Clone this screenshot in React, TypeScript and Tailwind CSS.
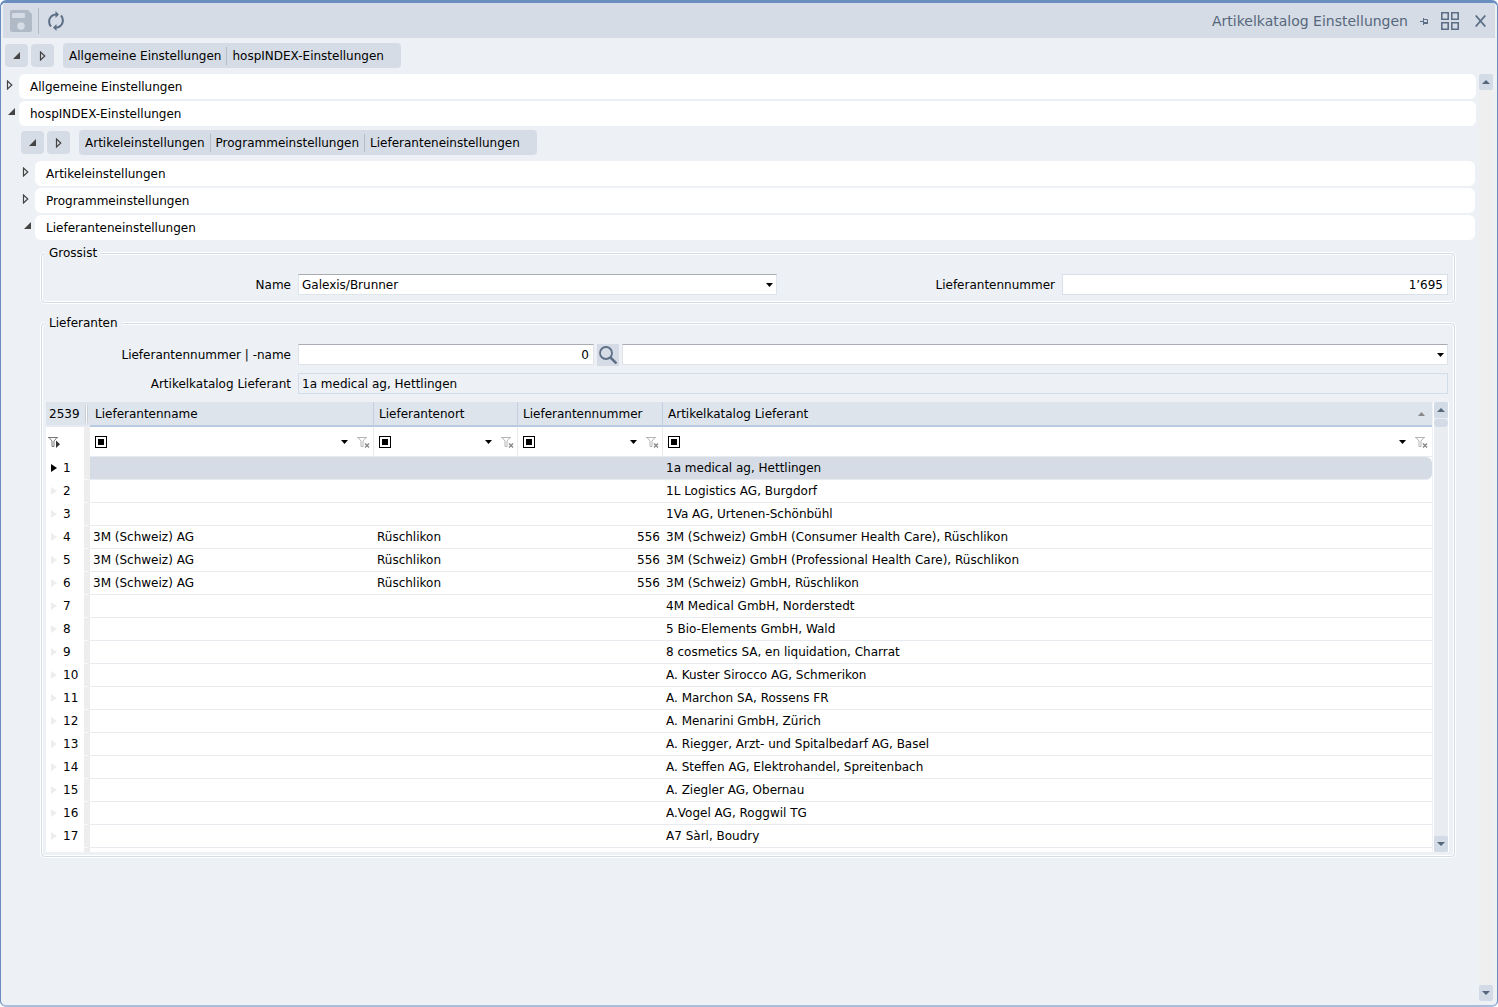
import type { ReactNode } from 'react';

type Supplier = {
  name?: string;
  city?: string;
  no?: string;
  catalog: string;
};

const suppliers: Supplier[] = [
  { catalog: '1a medical ag, Hettlingen' },
  { catalog: '1L Logistics AG, Burgdorf' },
  { catalog: '1Va AG, Urtenen-Schönbühl' },
  { name: '3M (Schweiz) AG', city: 'Rüschlikon', no: '556', catalog: '3M (Schweiz) GmbH (Consumer Health Care), Rüschlikon' },
  { name: '3M (Schweiz) AG', city: 'Rüschlikon', no: '556', catalog: '3M (Schweiz) GmbH (Professional Health Care), Rüschlikon' },
  { name: '3M (Schweiz) AG', city: 'Rüschlikon', no: '556', catalog: '3M (Schweiz) GmbH, Rüschlikon' },
  { catalog: '4M Medical GmbH, Norderstedt' },
  { catalog: '5 Bio-Elements GmbH, Wald' },
  { catalog: '8 cosmetics SA, en liquidation, Charrat' },
  { catalog: 'A. Kuster Sirocco AG, Schmerikon' },
  { catalog: 'A. Marchon SA, Rossens FR' },
  { catalog: 'A. Menarini GmbH, Zürich' },
  { catalog: 'A. Riegger, Arzt- und Spitalbedarf AG, Basel' },
  { catalog: 'A. Steffen AG, Elektrohandel, Spreitenbach' },
  { catalog: 'A. Ziegler AG, Obernau' },
  { catalog: 'A.Vogel AG, Roggwil TG' },
  { catalog: 'A7 Sàrl, Boudry' },
];

const columns = ['Lieferantenname', 'Lieferantenort', 'Lieferantennummer', 'Artikelkatalog Lieferant'];

function OpenIcon() {
  return (
    <svg viewBox="0 0 7 7" className="h-[7px] w-[7px]" fill="#444">
      <path d="M7 0v7H0z" />
    </svg>
  );
}

function ClosedIcon() {
  return (
    <svg viewBox="0 0 7 10" className="h-[10px] w-[7px]" fill="none" stroke="#444" strokeWidth="1.200">
      <path d="M1.500 1v8L5.800 5z" />
    </svg>
  );
}

function DownIcon() {
  return (
    <svg viewBox="0 0 7 4" className="h-1 w-[7px]" fill="#000">
      <path d="M0 0h7L3.500 4z" />
    </svg>
  );
}

function FunnelIcon({ kind }: { kind: 'apply' | 'clear' }) {
  return (
    <svg viewBox="0 0 13 12" className="h-3 w-[13px]" fill="none">
      {kind === 'apply' ? (
        <>
          <path d="M0 1.500h10M1 1.500l3 3.500v5.500h2V5l3-3.500" stroke="#777" />
          <path d="M8 4.500V12l4-3.700z" fill="#333" />
        </>
      ) : (
        <>
          <path d="M0 1.500h10M1 1.500l3 3.500v5.500h2V5l3-3.500" stroke="#b4b4b4" />
          <path d="M8 7.500l4 4m0-4l-4 4" stroke="#888" strokeWidth="1.400" />
        </>
      )}
    </svg>
  );
}

function ToggleButtons() {
  return (
    <div className="flex gap-[3px]">
      <button aria-label="Alle öffnen" className="flex h-[23px] w-[23px] items-center justify-center rounded-sm bg-[#d5dce5]">
        <OpenIcon />
      </button>
      <button aria-label="Alle schliessen" className="flex h-[23px] w-[23px] items-center justify-center rounded-sm bg-[#d5dce5]">
        <ClosedIcon />
      </button>
    </div>
  );
}

function JumpBar({ items }: { items: string[] }) {
  return (
    <div className="flex items-center gap-[9px]">
      <ToggleButtons />
      <nav className="flex h-[25px] items-center rounded-sm bg-[#d5dce5] pr-3">
        {items.map((item, i) => (
          <a
            key={item}
            href="#"
            className={i > 0 ? 'border-l border-[#b4bcc6] px-[5px] leading-[18px]' : 'pr-[5px] pl-[6px] leading-[18px]'}
          >
            {item}
          </a>
        ))}
      </nav>
    </div>
  );
}

function TreeRow({ label, open }: { label: string; open?: boolean }) {
  return (
    <button className="flex w-full text-left" aria-expanded={!!open}>
      <span className={open ? 'flex h-[21px] w-4 items-center pl-[5px]' : 'flex h-[21px] w-4 items-center pl-[3px]'}>
        {open ? <OpenIcon /> : <ClosedIcon />}
      </span>
      <span className="flex h-[25px] flex-1 items-center rounded-md bg-white pl-[11px]">{label}</span>
    </button>
  );
}

function Group({ title, children }: { title: string; children: ReactNode }) {
  return (
    <fieldset className="rounded-sm border border-[#d3dde5] pr-[5px] pb-1 pl-1 shadow-[0_0_0_1px_#fff,inset_0_0_0_1px_#fff]">
      <legend className="-ml-px bg-[#edf0f5] px-1 leading-4">{title}</legend>
      {children}
    </fieldset>
  );
}

function Combo({ id, label, value }: { id: string; label?: string; value: string }) {
  return (
    <div className="relative min-w-0 flex-1">
      <select
        id={id}
        aria-label={label}
        className="block h-[21px] w-full appearance-none border border-[#dde4ea] border-t-[#a9adb3] bg-white px-[3px] leading-[18px]"
      >
        <option>{value}</option>
      </select>
      <span className="pointer-events-none absolute top-[9px] right-1">
        <DownIcon />
      </span>
    </div>
  );
}

function ScrollBar({ thumb }: { thumb?: boolean }) {
  const button = 'flex h-4 w-full items-center justify-center rounded-xs bg-[#d3dbe6]';
  return (
    <div className={thumb ? 'flex w-4 flex-col border-x border-white bg-[#e9edf2]' : 'flex w-[14px] flex-col bg-[#efefef]'}>
      <button aria-label="Nach oben" className={button}>
        <svg viewBox="0 0 8 4" className="h-1 w-2" fill="#56677c">
          <path d="M0 4h8L4 0z" />
        </svg>
      </button>
      {thumb && <div className="mt-px h-2 rounded-sm bg-[#d3dbe6]" />}
      <div className="flex-1" />
      <button aria-label="Nach unten" className={button}>
        <svg viewBox="0 0 8 4" className="h-1 w-2" fill="#56677c">
          <path d="M0 0h8L4 4z" />
        </svg>
      </button>
    </div>
  );
}

function TitleBar() {
  return (
    <header className="mx-[2px] flex h-[35px] items-center justify-between bg-[#d5dce5] pr-[9px] pl-[7px] text-[#56677c]">
      <div className="flex items-center">
        <button aria-label="Speichern" disabled>
          <svg viewBox="0 0 22 22" className="h-[22px] w-[22px]">
            <path d="M2 0h16l4 4v16a2 2 0 0 1-2 2H2a2 2 0 0 1-2-2V2a2 2 0 0 1 2-2z" fill="#b0bac6" />
            <rect x="2" y="3" width="13" height="5" rx="1" fill="#d5dce5" />
            <circle cx="11" cy="16" r="3.800" fill="#d5dce5" />
          </svg>
        </button>
        <span className="ml-[6px] h-[26px] w-px bg-[#b0bac6]" />
        <button aria-label="Aktualisieren" className="ml-[9px]">
          <svg viewBox="0 0 16 20" className="h-5 w-4" fill="none" stroke="#5d6f87" strokeWidth="2">
            <path d="M3 15.500C-.5 11.500 1 4 8 3.500" />
            <path d="M13 4.500C16.500 8.500 15 16 8 16.500" />
            <path d="M7.500 0v7L11 3.500zM8.500 13v7L5 16.500z" fill="#5d6f87" stroke="none" />
          </svg>
        </button>
      </div>
      <div className="flex items-center">
        <h1 className="text-sm">Artikelkatalog Einstellungen</h1>
        <button aria-label="Anheften" className="ml-3">
          <svg viewBox="0 0 8 8" className="h-2 w-2" fill="none" stroke="#5d6f87">
            <path d="M0 4.500h3M3.500 1v7M3.500 2.500h4v4" />
            <path d="M3 6h5" strokeWidth="2" />
          </svg>
        </button>
        <button aria-label="Kacheln" className="ml-[13px]">
          <svg viewBox="0 0 18 18" className="h-[18px] w-[18px]" fill="none" stroke="#5d6f87" strokeWidth="1.600">
            <path d="M.8.800h6.400v6.400H.8zM10.800.800h6.400v6.400h-6.400zM.8 10.800h6.400v6.400H.8zM10.800 10.800h6.400v6.400h-6.400z" />
          </svg>
        </button>
        <button aria-label="Schliessen" className="ml-4">
          <svg viewBox="0 0 11 12" className="h-3 w-[11px]" fill="none" stroke="#5d6f87" strokeWidth="1.800">
            <path d="M.7.500l9.600 11M10.300.500L.7 11.500" />
          </svg>
        </button>
      </div>
    </header>
  );
}

function SupplierTable() {
  return (
    <div className="mt-2 flex gap-px">
      <table className="flex-1 table-fixed border-separate border-spacing-0 bg-white">
        <colgroup>
          <col className="w-[44px]" />
          <col className="w-[284px]" />
          <col className="w-[144px]" />
          <col className="w-[145px]" />
          <col />
        </colgroup>
        <thead>
          <tr className="h-[25px] bg-[#dde4ec] text-left">
            <th className="border-b-2 border-[#e6ebf1] p-0 font-normal">
              <span className="flex items-center justify-between pr-[2px] pl-[3px]">
                2539
                <span className="h-[18px] w-[3px] border-x border-[#c9ced5] bg-white" />
              </span>
            </th>
            {columns.map((column, i) => (
              <th
                key={column}
                className="border-r border-b-2 border-[#b9cbe0] border-r-[#c3d1e2] p-0 pl-[5px] font-normal last:border-r-0"
              >
                <span className="flex items-center justify-between pr-[7px]">
                  {column}
                  {i === 3 && (
                    <svg viewBox="0 0 7 4" className="h-1 w-[7px]" fill="#888">
                      <path d="M0 4h7L3.500 0z" />
                    </svg>
                  )}
                </span>
              </th>
            ))}
          </tr>
          <tr className="h-[30px]">
            <td className="border-r-[6px] border-[#ededed] p-0 pl-[2px]">
              <button aria-label="Filter anwenden" className="block">
                <FunnelIcon kind="apply" />
              </button>
            </td>
            {columns.map((column) => (
              <td key={column} className="border-r border-b border-[#e8ecf1] p-0 pr-[3px] pl-[5px] last:border-r-0 last:pr-1">
                <div className="flex items-center">
                  <button
                    aria-label={`Filterart ${column}`}
                    className="flex h-3 w-3 items-center justify-center border border-black"
                  >
                    <span className="h-[6px] w-[6px] bg-black" />
                  </button>
                  <button aria-label={`Filterwerte ${column}`} className="mr-[9px] ml-auto">
                    <DownIcon />
                  </button>
                  <button aria-label={`Filter löschen ${column}`}>
                    <FunnelIcon kind="clear" />
                  </button>
                </div>
              </td>
            ))}
          </tr>
        </thead>
        <tbody>
          {suppliers.map((s, i) => {
            const cell = i === 0 ? 'border-b border-[#e8ecf1] bg-[#d5dce5] p-0 pl-[3px] last:rounded-r-md' : 'border-b border-[#e8ecf1] p-0 pl-[3px]';
            return (
              <tr key={s.catalog} className="h-[23px] leading-[18px]">
                <td className="border-r-[6px] border-b border-[#ededed] border-b-white p-0 pl-[5px]">
                  <span className="flex items-center gap-[6px]">
                    <svg viewBox="0 0 6 8" className="h-2 w-[6px]" fill={i === 0 ? '#000' : '#ededed'}>
                      <path d="M0 0v8l6-4z" />
                    </svg>
                    {i + 1}
                  </span>
                </td>
                <td className={cell}>{s.name}</td>
                <td className={cell}>{s.city}</td>
                <td className={`${cell} pr-[3px] text-right`}>{s.no}</td>
                <td className={cell}>{s.catalog}</td>
              </tr>
            );
          })}
          <tr className="h-1">
            <td className="border-r-[6px] border-[#ededed] p-0" />
            <td colSpan={4} className="p-0" />
          </tr>
        </tbody>
      </table>
      <ScrollBar thumb />
    </div>
  );
}

export default function App() {
  return (
    <div className="flex min-h-screen flex-col rounded-md border-x border-t-[3px] border-b-2 border-[#6b8ec1] border-b-[#a9bedc] bg-[#edf0f5] font-['DejaVu_Sans',Verdana,sans-serif] text-xs text-black">
      <TitleBar />
      <div className="mt-[5px] pl-1">
        <JumpBar items={['Allgemeine Einstellungen', 'hospINDEX-Einstellungen']} />
      </div>
      <div className="mt-[6px] mb-1 flex flex-1 gap-[3px] pr-1">
        <main className="min-w-0 flex-1 pl-[2px]">
          <div className="flex flex-col gap-[2px]">
            <TreeRow label="Allgemeine Einstellungen" />
            <TreeRow label="hospINDEX-Einstellungen" open />
          </div>
          <div className="mt-1 pr-px pl-4">
            <div className="pl-[2px]">
              <JumpBar items={['Artikeleinstellungen', 'Programmeinstellungen', 'Lieferanteneinstellungen']} />
            </div>
            <div className="mt-[6px] flex flex-col gap-[2px]">
              <TreeRow label="Artikeleinstellungen" />
              <TreeRow label="Programmeinstellungen" />
              <TreeRow label="Lieferanteneinstellungen" open />
            </div>
            <div className="mt-[5px] mr-5 ml-[22px] flex flex-col gap-3">
              <Group title="Grossist">
                <div className="mt-[13px] mr-px mb-[3px] grid grid-cols-[245px_479fr_271fr_386fr] items-center gap-[7px]">
                  <label htmlFor="name" className="text-right">Name</label>
                  <Combo id="name" value="Galexis/Brunner" />
                  <label htmlFor="number" className="text-right">Lieferantennummer</label>
                  <input
                    id="number"
                    defaultValue="1’695"
                    className="h-[21px] w-full min-w-0 border border-[#d9e0ea] bg-white px-1 text-right"
                  />
                </div>
              </Group>
              <Group title="Lieferanten">
                <div className="mt-[13px] mr-px grid grid-cols-[245px_1fr] items-center gap-x-[7px] gap-y-2">
                  <label htmlFor="search" className="text-right">Lieferantennummer | -name</label>
                  <div className="flex h-[21px] gap-[3px]">
                    <input
                      id="search"
                      defaultValue="0"
                      className="h-[21px] w-[296px] border border-[#dde4ea] border-t-[#a9adb3] bg-white px-1 text-right"
                    />
                    <button aria-label="Suchen" className="flex h-[22px] w-[22px] items-center justify-center bg-[#d5dce5]">
                      <svg viewBox="0 0 18 18" className="h-[18px] w-[18px]" fill="none" stroke="#5d6f87">
                        <circle cx="7" cy="7" r="6" strokeWidth="1.800" />
                        <path d="M11.500 11.500l6 6" strokeWidth="2.500" />
                      </svg>
                    </button>
                    <Combo id="search-name" label="Lieferantenname" value="" />
                  </div>
                  <label htmlFor="catalog" className="text-right">Artikelkatalog Lieferant</label>
                  <input
                    id="catalog"
                    readOnly
                    defaultValue="1a medical ag, Hettlingen"
                    className="h-[21px] w-full border border-[#d3dce9] bg-[#edf0f5] px-[3px]"
                  />
                </div>
                <SupplierTable />
              </Group>
            </div>
          </div>
        </main>
        <ScrollBar />
      </div>
    </div>
  );
}
